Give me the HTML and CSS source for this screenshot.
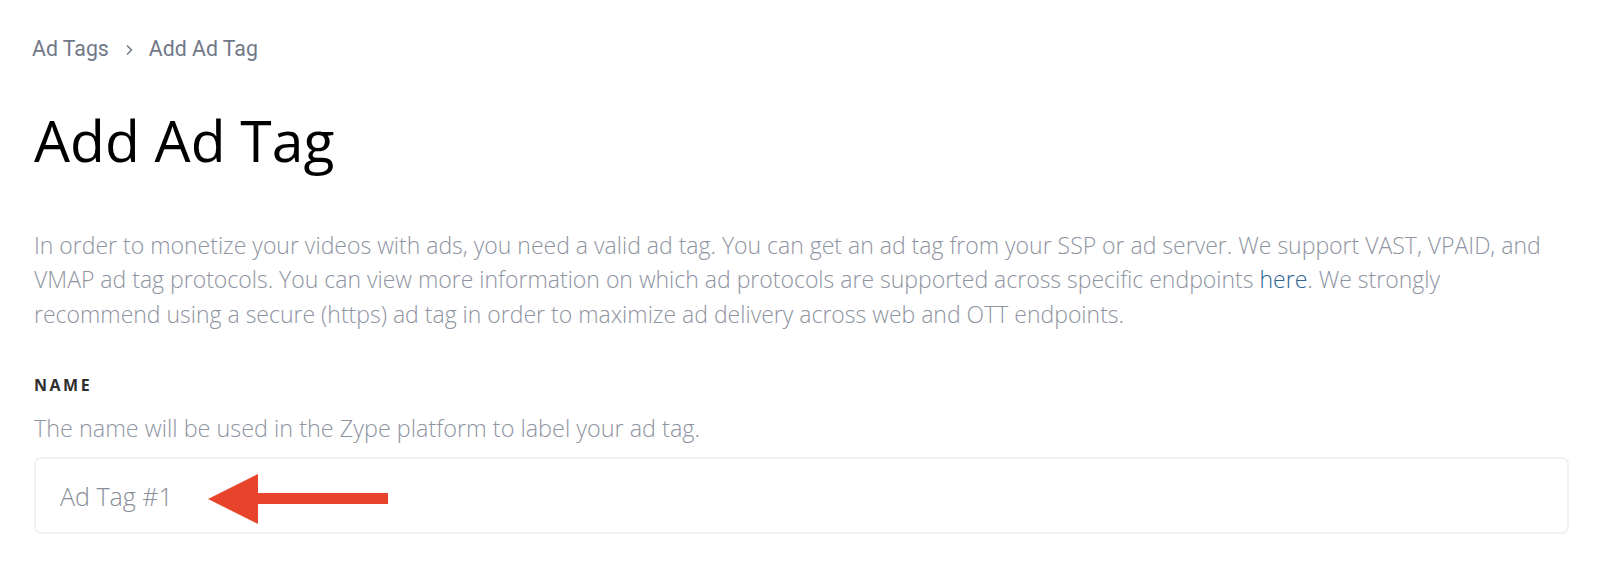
FILE: index.html
```html
<!DOCTYPE html>
<html lang="en">
  <head>
    <meta charset="UTF-8" />
    <title>Add Ad Tag</title>
    <link rel="stylesheet" href="styles.css">
  </head>
  <body>
    <div class="page">
      <nav class="crumbs">
        <a href="#">Ad Tags</a>
        <svg class="chev" width="8" height="12" viewBox="0 0 8 12">
          <path d="M2 1.5 L6.5 6 L2 10.5" fill="none" stroke="currentColor" stroke-width="1.5" />
        </svg>
        <span>Add Ad Tag</span>
      </nav>

      <h1>Add Ad Tag</h1>

      <p class="intro">
        In order to monetize your videos with ads, you need a valid ad tag. You can get an ad tag from your SSP or ad server. We support VAST, VPAID, and
        VMAP ad tag protocols. You can view more information on which ad protocols are supported across specific endpoints <a href="#">here</a>. We strongly
        recommend using a secure (https) ad tag in order to maximize ad delivery across web and OTT endpoints.
      </p>

      <!-- Name field -->
      <label class="field-label" for="name">Name</label>
      <p class="hint">The name will be used in the Zype platform to label your ad tag.</p>
      <div class="field">
        <input id="name" type="text" value="Ad Tag #1" />
        <svg class="arrow" width="180" height="50" viewBox="0 0 180 50">
          <polygon points="0,25 50,0 50,50" fill="#e8432b" />
          <rect x="48" y="19" width="132" height="11" fill="#e8432b" />
        </svg>
      </div>
    </div>
  </body>
</html>
```

FILE: styles.css
```css
body {
  margin: 0;
  font-family: "Open Sans", sans-serif;
  background: #fff;
}
.page {
  padding: 37px 37px 0 34px;
}
.crumbs {
  display: flex;
  align-items: center;
  gap: 16px;
  font-family: Roboto, sans-serif;
  font-size: 21.3px;
  line-height: 24px;
  color: #717888;
  margin-left: -2px;
}
.crumbs a {
  color: inherit;
  text-decoration: none;
}
.chev {
  margin-top: 1px;
}
h1 {
  margin: 44px 0 0;
  font-size: 57px;
  line-height: 70px;
  font-weight: 400;
  color: #000;
}
.intro {
  margin: 53px 0 0;
  font-size: 23px;
  line-height: 34.4px;
  font-weight: 300;
  color: #8e94a1;
}
.intro a {
  color: #2b6193;
  text-decoration: none;
}
.field-label {
  display: block;
  margin-top: 44px;
  font-size: 16px;
  line-height: 20px;
  font-weight: 700;
  letter-spacing: 2.5px;
  text-transform: uppercase;
  color: #2e2e2e;
}
.hint {
  margin: 16px 0 0;
  font-size: 23.4px;
  line-height: 34px;
  font-weight: 300;
  color: #8e94a1;
}
.field {
  position: relative;
  margin-top: 12px;
}
.field input {
  display: block;
  width: 100%;
  height: 77px;
  box-sizing: border-box;
  padding: 0 24px;
  border: 2px solid #f1f1f3;
  border-radius: 7px;
  font-family: "Open Sans", sans-serif;
  font-size: 25px;
  font-weight: 300;
  color: #888d97;
  outline: none;
}
.arrow {
  position: absolute;
  left: 174px;
  top: 17px;
}
```
